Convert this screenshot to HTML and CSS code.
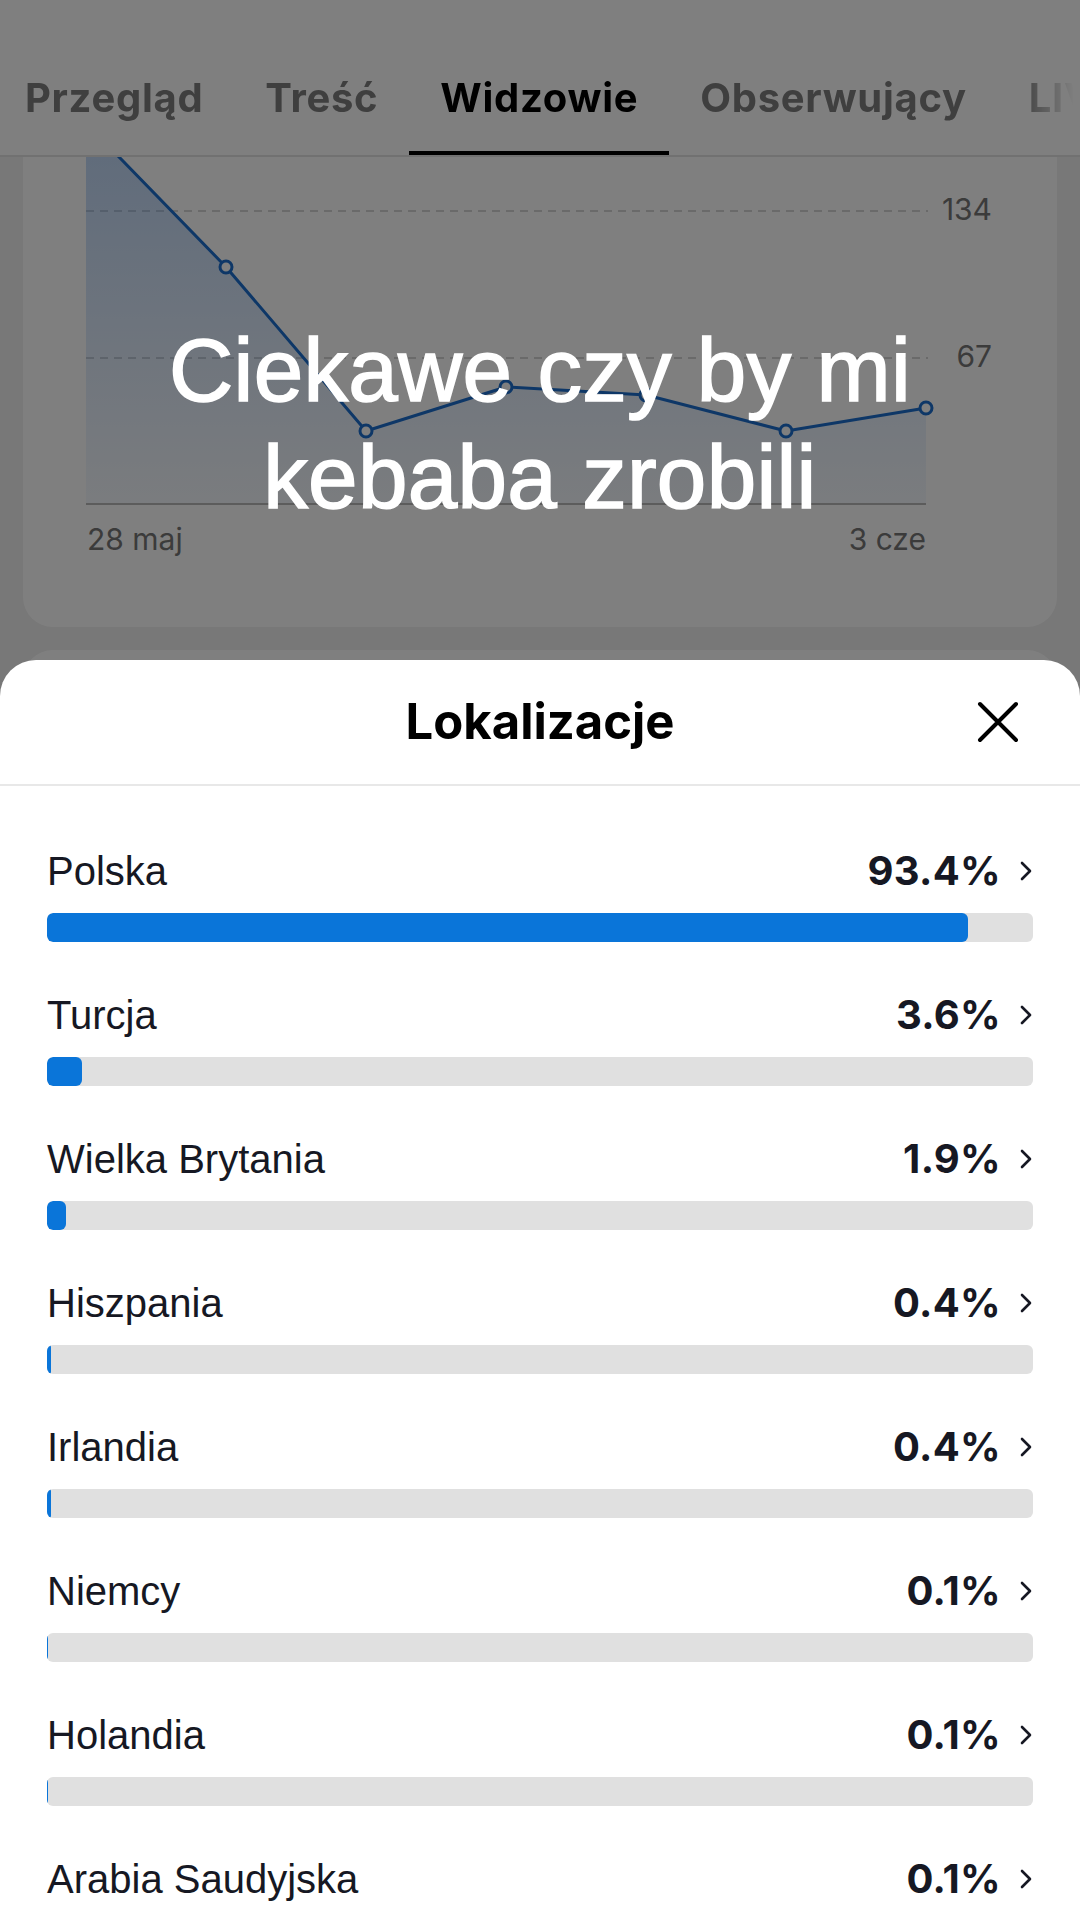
FILE: index.html
```html
<!DOCTYPE html>
<html lang="pl">
<head>
    <meta charset="UTF-8">
    <meta name="viewport" content="width=device-width, initial-scale=1.0">
    <title>Widzowie - Lokalizacje</title>
    <link rel="stylesheet" href="styles.css">
</head>
<body>
    <div class="screen">
        <div class="page">
            <nav class="tabs">
                <div class="tab-list">
                    <span class="tab">Przegląd</span>
                    <span class="tab">Treść</span>
                    <span class="tab active">Widzowie</span>
                    <span class="tab">Obserwujący</span>
                    <span class="tab">LIVE</span>
                </div>
            </nav>
            <main class="content">
                <section class="card chart-card">
                    <svg class="chart" width="1034" height="470" viewBox="23 157 1034 470">
                        <defs>
                            <linearGradient id="areaFill" gradientUnits="userSpaceOnUse" x1="0" y1="123" x2="0" y2="504">
                                <stop offset="0" stop-color="#3d86e6" stop-opacity="0.34"/>
                                <stop offset="1" stop-color="#3d86e6" stop-opacity="0.05"/>
                            </linearGradient>
                        </defs>
                        <line class="grid" x1="86" y1="211" x2="928" y2="211"/>
                        <line class="grid" x1="86" y1="358" x2="928" y2="358"/>
                        <text class="axis-label" x="992" y="220" text-anchor="end">134</text>
                        <text class="axis-label" x="992" y="367" text-anchor="end">67</text>
                        <polygon fill="url(#areaFill)" points="86,123 226,267 366,431 506,387 646,395 786,431 926,408 926,504 86,504"/>
                        <line class="axis" x1="86" y1="504" x2="926" y2="504"/>
                        <polyline class="series" points="86,123 226,267 366,431 506,387 646,395 786,431 926,408"/>
                        <circle class="dot" cx="226" cy="267" r="6"/>
                        <circle class="dot" cx="366" cy="431" r="6"/>
                        <circle class="dot" cx="506" cy="387" r="6"/>
                        <circle class="dot" cx="646" cy="395" r="6"/>
                        <circle class="dot" cx="786" cy="431" r="6"/>
                        <circle class="dot" cx="926" cy="408" r="6"/>
                        <text class="axis-label" x="87" y="550">28 maj</text>
                        <text class="axis-label" x="926" y="550" text-anchor="end">3 cze</text>
                    </svg>
                </section>
                <section class="card next-card"></section>
            </main>
        </div>

        <div class="dim"></div>

        <p class="caption">Ciekawe czy by mi<br>kebaba zrobili</p>

        <section class="sheet">
            <header class="sheet-header">
                <h2>Lokalizacje</h2>
                <button class="close-btn" aria-label="Zamknij">
                    <svg width="42" height="42" viewBox="0 0 42 42">
                        <path d="M3 3 L39 39 M39 3 L3 39" stroke="#000" stroke-width="4" stroke-linecap="round"/>
                    </svg>
                </button>
            </header>
            <ul class="locations">
                <li class="location">
                    <div class="location-top">
                        <span class="name">Polska</span>
                        <span class="percent">93.4%</span>
                        <svg class="chevron" width="14" height="22" viewBox="0 0 14 22"><path d="M3 3 L11 11 L3 19"/></svg>
                    </div>
                    <div class="bar"><div class="bar-fill" style="width: 93.4%"></div></div>
                </li>
                <li class="location">
                    <div class="location-top">
                        <span class="name">Turcja</span>
                        <span class="percent">3.6%</span>
                        <svg class="chevron" width="14" height="22" viewBox="0 0 14 22"><path d="M3 3 L11 11 L3 19"/></svg>
                    </div>
                    <div class="bar"><div class="bar-fill" style="width: 3.6%"></div></div>
                </li>
                <li class="location">
                    <div class="location-top">
                        <span class="name">Wielka Brytania</span>
                        <span class="percent">1.9%</span>
                        <svg class="chevron" width="14" height="22" viewBox="0 0 14 22"><path d="M3 3 L11 11 L3 19"/></svg>
                    </div>
                    <div class="bar"><div class="bar-fill" style="width: 1.9%"></div></div>
                </li>
                <li class="location">
                    <div class="location-top">
                        <span class="name">Hiszpania</span>
                        <span class="percent">0.4%</span>
                        <svg class="chevron" width="14" height="22" viewBox="0 0 14 22"><path d="M3 3 L11 11 L3 19"/></svg>
                    </div>
                    <div class="bar"><div class="bar-fill" style="width: 0.4%"></div></div>
                </li>
                <li class="location">
                    <div class="location-top">
                        <span class="name">Irlandia</span>
                        <span class="percent">0.4%</span>
                        <svg class="chevron" width="14" height="22" viewBox="0 0 14 22"><path d="M3 3 L11 11 L3 19"/></svg>
                    </div>
                    <div class="bar"><div class="bar-fill" style="width: 0.4%"></div></div>
                </li>
                <li class="location">
                    <div class="location-top">
                        <span class="name">Niemcy</span>
                        <span class="percent">0.1%</span>
                        <svg class="chevron" width="14" height="22" viewBox="0 0 14 22"><path d="M3 3 L11 11 L3 19"/></svg>
                    </div>
                    <div class="bar"><div class="bar-fill" style="width: 0.1%"></div></div>
                </li>
                <li class="location">
                    <div class="location-top">
                        <span class="name">Holandia</span>
                        <span class="percent">0.1%</span>
                        <svg class="chevron" width="14" height="22" viewBox="0 0 14 22"><path d="M3 3 L11 11 L3 19"/></svg>
                    </div>
                    <div class="bar"><div class="bar-fill" style="width: 0.1%"></div></div>
                </li>
                <li class="location">
                    <div class="location-top">
                        <span class="name">Arabia Saudyjska</span>
                        <span class="percent">0.1%</span>
                        <svg class="chevron" width="14" height="22" viewBox="0 0 14 22"><path d="M3 3 L11 11 L3 19"/></svg>
                    </div>
                    <div class="bar"><div class="bar-fill" style="width: 0.1%"></div></div>
                </li>
            </ul>
        </section>
    </div>
</body>
</html>
```

FILE: styles.css
```css
* {
    margin: 0;
    padding: 0;
    box-sizing: border-box;
}
html, body {
    width: 1080px;
    height: 1920px;
    overflow: hidden;
}
body {
    font-family: "Liberation Sans", Arial, sans-serif;
    background-color: #f0f0f0;
    color: #161823;
}
.screen {
    position: relative;
    width: 1080px;
    height: 1920px;
    overflow: hidden;
}

/* page behind the sheet */
.tabs {
    position: relative;
    z-index: 1;
    height: 157px;
    background-color: #fff;
    border-bottom: 2px solid #e3e3e3;
    overflow: hidden;
}
.tab-list {
    display: flex;
    margin-left: -6px;
    -webkit-mask-image: linear-gradient(to right, #000 1025px, transparent 1080px);
    mask-image: linear-gradient(to right, #000 1025px, transparent 1080px);
}
.tab {
    position: relative;
    flex-shrink: 0;
    padding: 73px 31px 32px;
    font-family: Inter, "Liberation Sans", sans-serif;
    font-size: 40px;
    font-weight: 700;
    line-height: 50px;
    letter-spacing: 0.7px;
    color: #7f7f7f;
    white-space: nowrap;
}
.tab.active {
    color: #000;
}
.tab.active::after {
    content: "";
    position: absolute;
    left: 0;
    right: 0;
    bottom: -2px;
    height: 6px;
    background-color: #000;
}
.content {
    display: flex;
    flex-direction: column;
    gap: 23px;
    padding: 0 23px;
}
.card {
    background-color: #fff;
    border-radius: 30px;
}
.chart-card {
    height: 470px;
    border-radius: 0 0 30px 30px;
}
.chart {
    display: block;
}
.chart .grid {
    stroke: #d4d4d4;
    stroke-width: 2;
    stroke-dasharray: 8 6;
}
.chart .axis {
    stroke: #b8b8b8;
    stroke-width: 2;
}
.chart .series {
    fill: none;
    stroke: #1c6fcf;
    stroke-width: 3;
    stroke-linejoin: round;
}
.chart .dot {
    fill: #fff;
    stroke: #1c6fcf;
    stroke-width: 3;
}
.chart .axis-label {
    font-family: Inter, "Liberation Sans", sans-serif;
    font-size: 30px;
    fill: #777;
}
.next-card {
    height: 400px;
}

/* dimming + video caption */
.dim {
    position: absolute;
    inset: 0;
    z-index: 2;
    background-color: rgba(0, 0, 0, 0.5);
}
.caption {
    position: absolute;
    top: 317px;
    left: 0;
    right: 0;
    z-index: 3;
    font-family: "Liberation Sans", Arial, sans-serif;
    font-size: 89px;
    line-height: 107px;
    letter-spacing: 0.3px;
    text-align: center;
    color: #fff;
    -webkit-text-stroke: 1.6px #fff;
}

/* bottom sheet */
.sheet {
    position: absolute;
    top: 660px;
    left: 0;
    right: 0;
    bottom: 0;
    z-index: 4;
    background-color: #fff;
    border-radius: 36px 36px 0 0;
    overflow: hidden;
}
.sheet-header {
    display: grid;
    grid-template-columns: 1fr auto 1fr;
    align-items: center;
    height: 126px;
    border-bottom: 2px solid #e8e8e8;
}
.sheet-header h2 {
    grid-column: 2;
    font-family: Inter, "Liberation Sans", sans-serif;
    font-size: 49px;
    font-weight: 700;
    line-height: 60px;
    color: #000;
}
.close-btn {
    justify-self: end;
    display: flex;
    margin-right: 61px;
    background: none;
    border: none;
}
.locations {
    list-style: none;
    display: flex;
    flex-direction: column;
    gap: 50px;
    padding: 62px 47px 0;
}
.location-top {
    display: flex;
    align-items: center;
    height: 46px;
    margin-bottom: 19px;
}
.name {
    flex: 1;
    font-size: 40px;
    line-height: 46px;
    color: #161823;
}
.percent {
    font-family: Inter, "Liberation Sans", sans-serif;
    font-size: 40px;
    font-weight: 700;
    line-height: 46px;
    letter-spacing: 0.3px;
    color: #161823;
}
.chevron {
    margin-left: 18px;
}
.chevron path {
    fill: none;
    stroke: #161823;
    stroke-width: 2.6;
    stroke-linecap: round;
    stroke-linejoin: round;
}
.bar {
    height: 29px;
    background-color: #e0e0e0;
    border-radius: 6px;
    overflow: hidden;
}
.bar-fill {
    height: 100%;
    background-color: #0a75d9;
    border-radius: 6px;
}
```
